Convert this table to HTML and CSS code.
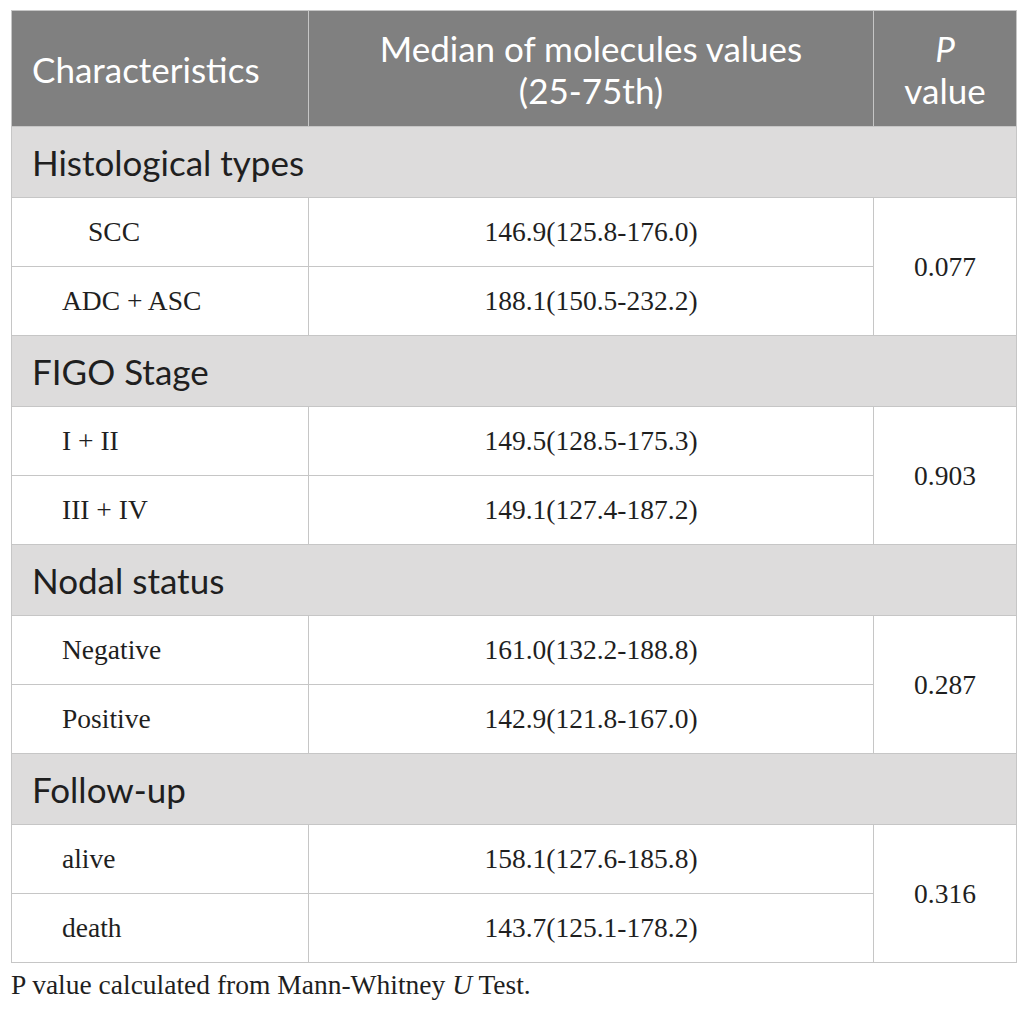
FILE: index.html
```html
<!DOCTYPE html>
<html lang="en">
<head>
  <meta charset="UTF-8">
  <title>Median of molecules values</title>
  <link rel="stylesheet" href="styles.css">
</head>
<body>
  <div class="table-wrap">
    <table class="data-table">
      <colgroup>
        <col class="col-char">
        <col class="col-median">
        <col class="col-p">
      </colgroup>
      <thead>
        <tr>
          <th class="left">Characteristics</th>
          <th>Median of molecules values<br>(25-75th)</th>
          <th><i>P</i><br>value</th>
        </tr>
      </thead>
      <tbody>
        <tr class="group"><td colspan="3">Histological types</td></tr>
        <tr>
          <td class="label label-deep">SCC</td>
          <td class="num">146.9(125.8-176.0)</td>
          <td class="num" rowspan="2">0.077</td>
        </tr>
        <tr>
          <td class="label">ADC + ASC</td>
          <td class="num">188.1(150.5-232.2)</td>
        </tr>

        <tr class="group"><td colspan="3">FIGO Stage</td></tr>
        <tr>
          <td class="label">I + II</td>
          <td class="num">149.5(128.5-175.3)</td>
          <td class="num" rowspan="2">0.903</td>
        </tr>
        <tr>
          <td class="label">III + IV</td>
          <td class="num">149.1(127.4-187.2)</td>
        </tr>

        <tr class="group"><td colspan="3">Nodal status</td></tr>
        <tr>
          <td class="label">Negative</td>
          <td class="num">161.0(132.2-188.8)</td>
          <td class="num" rowspan="2">0.287</td>
        </tr>
        <tr>
          <td class="label">Positive</td>
          <td class="num">142.9(121.8-167.0)</td>
        </tr>

        <tr class="group"><td colspan="3">Follow-up</td></tr>
        <tr>
          <td class="label">alive</td>
          <td class="num">158.1(127.6-185.8)</td>
          <td class="num" rowspan="2">0.316</td>
        </tr>
        <tr>
          <td class="label">death</td>
          <td class="num">143.7(125.1-178.2)</td>
        </tr>
      </tbody>
    </table>
    <p class="footnote">P value calculated from Mann-Whitney <i>U</i> Test.</p>
  </div>
</body>
</html>
```

FILE: styles.css
```css
body {
  margin: 0;
  background: #fff;
  color: #1f1f1f;
}

.table-wrap {
  padding: 10px 10px 0 11px;
}

.data-table {
  width: 1005px;
  border-collapse: collapse;
  table-layout: fixed;
}

.col-char { width: 297px; }
.col-median { width: 565px; }
.col-p { width: 143px; }

.data-table th,
.data-table td {
  border: 1px solid #c6c6c6;
  padding: 0 20px;
}

/* cabecalho cinza escuro */
.data-table th {
  height: 115px;
  background-color: #808080;
  color: #fff;
  font-family: Lato, "Open Sans", sans-serif;
  font-weight: normal;
  font-size: 35px;
  line-height: 42px;
  text-align: center;
}

.data-table th.left {
  text-align: left;
}

.data-table th i {
  font-style: italic;
}

.group td {
  height: 70px;
  background-color: #dddcdc;
  font-family: Lato, "Open Sans", sans-serif;
  font-size: 35px;
  color: #1f1f1f;
}

.data-table td.label,
.data-table td.num {
  height: 68px;
  font-family: "Liberation Serif", "Times New Roman", serif;
  font-size: 27.5px;
}

.data-table td.label {
  padding-left: 50px;
}

.data-table td.label-deep {
  padding-left: 76px;
}

.data-table td.num {
  text-align: center;
}

.footnote {
  margin: 6px 0 0;
  font-family: "Liberation Serif", "Times New Roman", serif;
  font-size: 27.5px;
  color: #1f1f1f;
}
```
